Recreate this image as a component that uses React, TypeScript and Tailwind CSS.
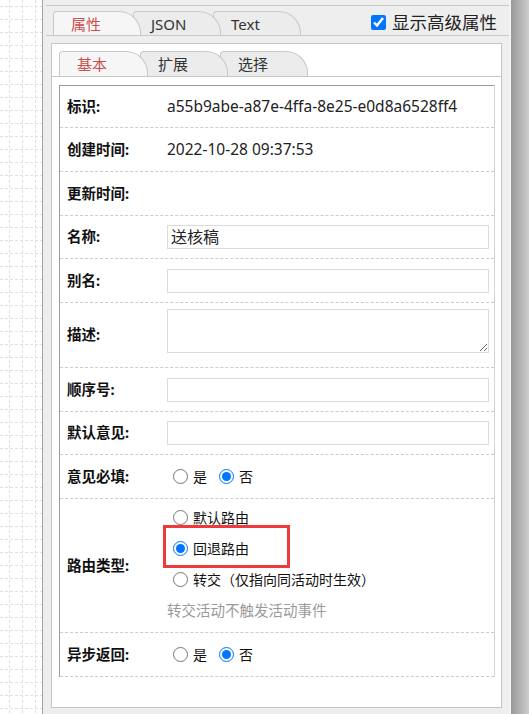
import React from "react";

function Grid() {
  const vs = [9, 22, 35];
  const hs: number[] = [];
  for (let y = 6; y < 714; y += 13) hs.push(y);
  return (
    <svg width="42" height="714" className="block">
      {vs.map((x) => (
        <line key={"v" + x} x1={x + 0.5} y1={0} x2={x + 0.5} y2={714} stroke="#e0e0e0" strokeWidth="1" strokeDasharray="3 2" />
      ))}
      {hs.map((y) => (
        <line key={"h" + y} x1={0} y1={y + 0.5} x2={42} y2={y + 0.5} stroke="#e0e0e0" strokeWidth="1" strokeDasharray="3 2" />
      ))}
    </svg>
  );
}

function Tab({ label, active, cls }: { label: string; active?: boolean; cls: string }) {
  return (
    <div
      className={`relative w-[88px] rounded-tl-[4px] rounded-tr-[22px] border border-b-0 border-[#c8c8c8] pl-[17px] ${cls} ${
        active ? "bg-[#f6f6f6] text-[#c9504f]" : "bg-[#ececec] text-[#333]"
      }`}
    >
      {label}
    </div>
  );
}

function Row({ h, label, children, top }: { h: string; label: string; children?: React.ReactNode; top?: boolean }) {
  return (
    <div className={`relative flex ${top ? "" : "items-center"} ${h} border-b border-dashed border-[#cccccc]`}>
      <div className={`w-[107px] shrink-0 pl-[7px] font-bold text-[14.5px] text-[#111] ${top ? "self-center" : ""}`}>{label}</div>
      <div className={`flex-1 min-w-0 pr-[5px] ${top ? "pt-[6px]" : ""}`}>{children}</div>
    </div>
  );
}

function Input({ value }: { value?: string }) {
  return (
    <input
      defaultValue={value}
      className="block w-full h-[24px] border border-[#dcdcdc] bg-white px-[3px] text-[16px] text-[#222] outline-none"
    />
  );
}

function Radio({ label, checked, name }: { label: string; checked?: boolean; name: string }) {
  return (
    <label className="flex items-center">
      <input type="radio" name={name} defaultChecked={checked} className="m-0 ml-[6px] w-[15px] h-[15px]" />
      <span className="ml-[5px] text-[14px] text-[#111]">{label}</span>
    </label>
  );
}

export default function App() {
  return (
    <div className="w-[529px] h-[714px] flex bg-white overflow-hidden [font-family:'Noto_Sans','Noto_Sans_CJK_SC',sans-serif]">
      <div className="w-[42px] h-full shrink-0">
        <Grid />
      </div>
      <div className="w-px h-full bg-[#a3a3a3] shrink-0" />
      <div className="w-[466px] h-full shrink-0 bg-[#eeeeee] flex flex-col">
        <div className="h-[5px]" />
        {/* outer tab header */}
        <div className="ml-[3px] h-[31px] border-t border-b border-[#c8c8c8] flex items-end pl-[7px]">
          <div className="flex items-end h-[24px] text-[15px] leading-[24px]">
            <Tab label="属性" active cls="z-30 h-[24px]" />
            <Tab label="JSON" cls="z-20 -ml-[8px] h-[24px]" />
            <Tab label="Text" cls="z-10 -ml-[8px] h-[24px]" />
          </div>
          <label className="ml-auto mr-[12px] self-center mt-[3px] flex items-center gap-[6px] text-[17.5px] text-[#222]">
            <input type="checkbox" defaultChecked className="m-0 w-[15px] h-[15px]" />
            显示高级属性
          </label>
        </div>
        {/* white panel */}
        <div className="ml-[8px] mt-[7px] w-[451px] h-[665px] border border-[#c6c6c6] bg-white flex flex-col">
          <div className="pt-[7px] border-b border-[#c8c8c8] pl-[7px] flex items-end">
            <div className="flex items-end h-[25px] text-[15px] leading-[25px]">
              <Tab label="基本" active cls="z-30 h-[25px] w-[89px]" />
              <Tab label="扩展" cls="z-20 -ml-[8px] h-[25px]" />
              <Tab label="选择" cls="z-10 -ml-[8px] h-[25px]" />
            </div>
          </div>
          <div className="ml-[7px] mr-[6px] mt-[8px] border-l border-t border-l-[#9c9c9c] border-t-[#9c9c9c] border-r border-r-[#d6d6d6] flex flex-col text-[14px] text-[#222]">
            <Row h="h-[42px]" label="标识:">
              <span className="text-[15.5px]">a55b9abe-a87e-4ffa-8e25-e0d8a6528ff4</span>
            </Row>
            <Row h="h-[44px]" label="创建时间:">
              <span className="text-[15.5px]">2022-10-28 09:37:53</span>
            </Row>
            <Row h="h-[44px]" label="更新时间:" />
            <Row h="h-[43px]" label="名称:">
              <Input value="送核稿" />
            </Row>
            <Row h="h-[44px]" label="别名:">
              <Input />
            </Row>
            <Row h="h-[65px]" label="描述:" top>
              <textarea className="block w-full h-[44px] border border-[#dcdcdc] bg-white outline-none text-[14px]" />
            </Row>
            <Row h="h-[44px]" label="顺序号:">
              <Input />
            </Row>
            <Row h="h-[43px]" label="默认意见:">
              <Input />
            </Row>
            <Row h="h-[44px]" label="意见必填:">
              <div className="flex items-center">
                <Radio name="yj" label="是" />
                <div className="ml-[6px]">
                  <Radio name="yj" label="否" checked />
                </div>
              </div>
            </Row>
            <Row h="h-[134px]" label="路由类型:">
              <div className="relative flex flex-col -mt-[3px]">
                <div className="h-[31px] flex items-center">
                  <Radio name="ly" label="默认路由" />
                </div>
                <div className="h-[31px] flex items-center">
                  <Radio name="ly" label="回退路由" checked />
                </div>
                <div className="h-[31px] flex items-center">
                  <Radio name="ly" label="转交（仅指向同活动时生效）" />
                </div>
                <div className="h-[31px] flex items-center text-[14.5px] text-[#9a9a9a]">转交活动不触发活动事件</div>
                <div className="absolute left-[-4px] top-[23px] w-[127px] h-[43px] border-[3px] border-[#ee3a3a] pointer-events-none" />
              </div>
            </Row>
            <Row h="h-[44px]" label="异步返回:">
              <div className="flex items-center">
                <Radio name="yb" label="是" />
                <div className="ml-[6px]">
                  <Radio name="yb" label="否" checked />
                </div>
              </div>
            </Row>
          </div>
        </div>
      </div>
      <div className="w-[2px] h-full bg-[#f3f3f3] shrink-0" />
      <div className="w-[18px] h-full shrink-0 bg-gradient-to-r from-[#999999] to-[#cdcdcd]" />
    </div>
  );
}
